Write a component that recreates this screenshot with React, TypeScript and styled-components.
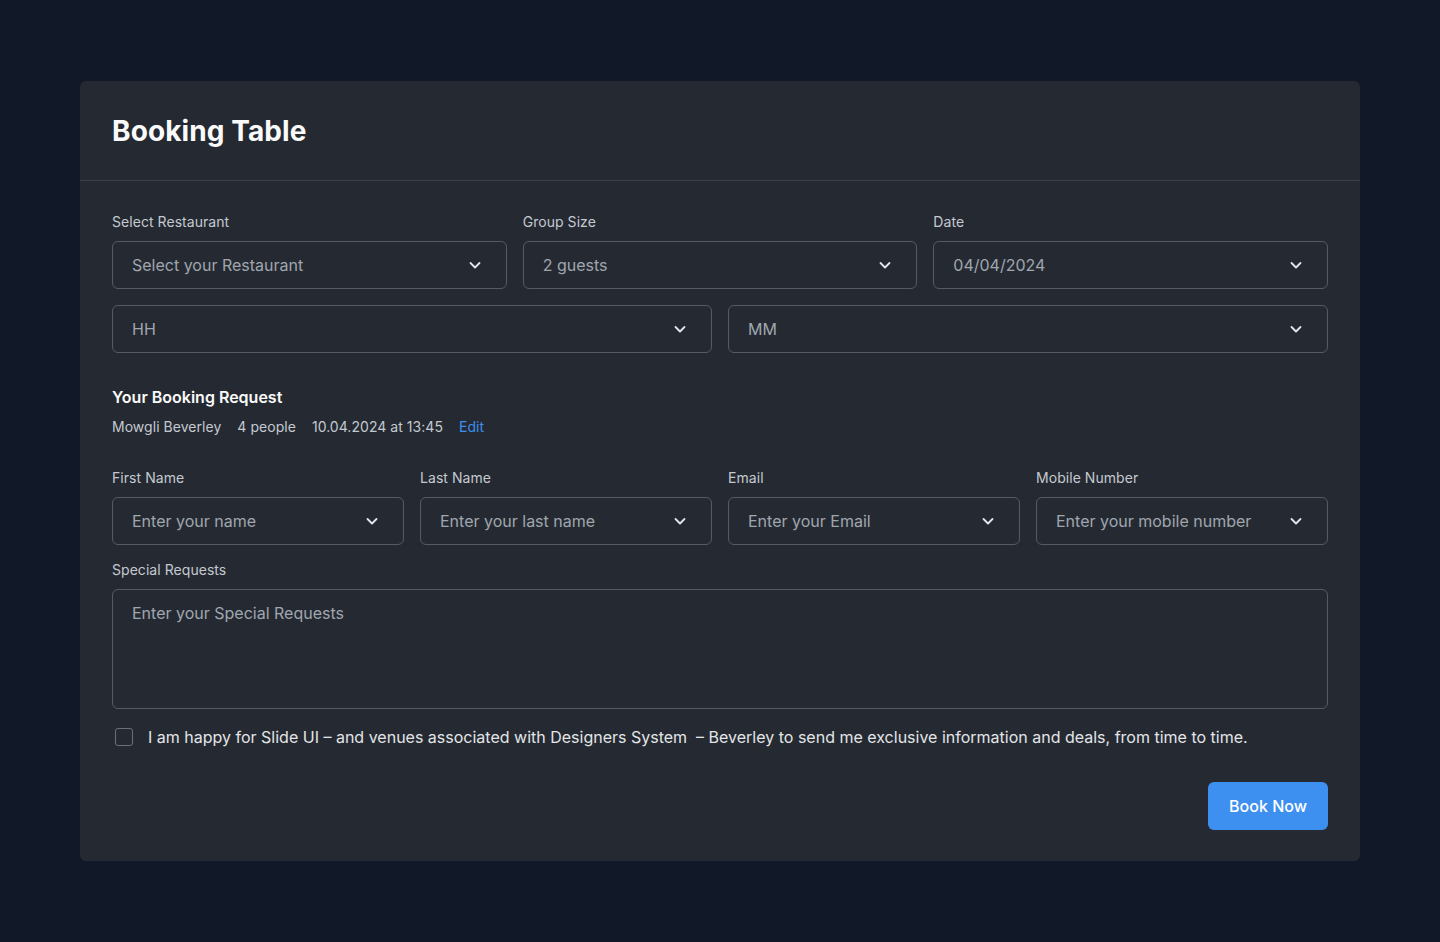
import React from "react";
import styled, { createGlobalStyle } from "styled-components";

const Global = createGlobalStyle`
  * { box-sizing: border-box; }
  html, body { margin: 0; padding: 0; background: #111827; }
  body { font-family: Inter, "Noto Sans", Arial, sans-serif; -webkit-font-smoothing: antialiased; }
`;

const Page = styled.div`
  min-height: 942px;
  padding: 81px 80px;
  background: #111827;
`;

const Card = styled.div`
  background: #252a32;
  border-radius: 6px;
`;

const Header = styled.div`
  padding: 32px 32px 31px;
  border-bottom: 1px solid #3a4049;
`;

const Title = styled.h1`
  margin: 0;
  font-size: 28px;
  line-height: 36px;
  font-weight: 700;
  color: #fafafa;
  letter-spacing: 0.1px;
`;

const Body = styled.div`
  padding: 31px 32px 31px;
  display: flex;
  flex-direction: column;
`;

const Grid = styled.div<{ $cols: number; $mt?: number }>`
  display: grid;
  grid-template-columns: repeat(${(p) => p.$cols}, 1fr);
  gap: 16px;
  margin-top: ${(p) => p.$mt ?? 0}px;
`;

const Field = styled.div<{ $mt?: number }>`
  display: flex;
  flex-direction: column;
  margin-top: ${(p) => p.$mt ?? 0}px;
`;

const Label = styled.label`
  font-size: 14px;
  line-height: 20px;
  color: #c4c9d0;
  margin-bottom: 9px;
  letter-spacing: 0.05px;
`;

const SelectBox = styled.div`
  height: 48px;
  border: 1px solid #555b64;
  border-radius: 6px;
  padding: 0 24px 0 19px;
  display: flex;
  align-items: center;
  justify-content: space-between;
  font-size: 16px;
  color: #a0a6af;
`;

const Chevron = () => (
  <svg width="14" height="14" viewBox="0 0 14 14" fill="none">
    <path d="M2.5 5L7 9.5L11.5 5" stroke="#e5e7eb" strokeWidth="1.8" strokeLinecap="round" strokeLinejoin="round" />
  </svg>
);

const Select = ({ value }: { value: string }) => (
  <SelectBox>
    <span>{value}</span>
    <Chevron />
  </SelectBox>
);

const SectionTitle = styled.h2`
  margin: 32px 0 0;
  font-size: 16px;
  line-height: 24px;
  font-weight: 600;
  color: #fafafa;
`;

const Details = styled.div`
  margin-top: 8px;
  display: flex;
  gap: 16px;
  font-size: 14px;
  line-height: 20px;
  color: #c4c9d0;
  letter-spacing: 0.04px;
`;

const EditLink = styled.a`
  color: #3d8ff0;
  text-decoration: none;
`;

const TextArea = styled.div`
  height: 120px;
  border: 1px solid #555b64;
  border-radius: 6px;
  padding: 11px 19px;
  font-size: 16px;
  line-height: 24px;
  color: #a0a6af;
`;

const CheckRow = styled.div`
  margin-top: 16px;
  display: flex;
  align-items: center;
  gap: 12px;
  font-size: 16px;
  line-height: 24px;
  color: #e3e5e8;
`;

const CheckWrap = styled.span`
  width: 24px;
  height: 24px;
  display: flex;
  align-items: center;
  justify-content: center;
`;

const Box = styled.span`
  width: 18px;
  height: 18px;
  border: 1.5px solid #6b717a;
  border-radius: 3px;
`;

const Actions = styled.div`
  margin-top: 33px;
  display: flex;
  justify-content: flex-end;
`;

const Button = styled.button`
  width: 120px;
  height: 48px;
  border: none;
  border-radius: 6px;
  background: #3d8ff0;
  color: #ffffff;
  font-family: inherit;
  font-size: 16px;
  font-weight: 500;
`;

export default function App() {
  return (
    <>
      <Global />
      <Page>
        <Card>
          <Header>
            <Title>Booking Table</Title>
          </Header>
          <Body>
            <Grid $cols={3}>
              <Field>
                <Label>Select Restaurant</Label>
                <Select value="Select your Restaurant" />
              </Field>
              <Field>
                <Label>Group Size</Label>
                <Select value="2 guests" />
              </Field>
              <Field>
                <Label>Date</Label>
                <Select value="04/04/2024" />
              </Field>
            </Grid>
            <Grid $cols={2} $mt={16}>
              <Select value="HH" />
              <Select value="MM" />
            </Grid>
            <SectionTitle>Your Booking Request</SectionTitle>
            <Details>
              <span>Mowgli Beverley</span>
              <span>4 people</span>
              <span>10.04.2024 at 13:45</span>
              <EditLink href="#">Edit</EditLink>
            </Details>
            <Grid $cols={4} $mt={31}>
              <Field>
                <Label>First Name</Label>
                <Select value="Enter your name" />
              </Field>
              <Field>
                <Label>Last Name</Label>
                <Select value="Enter your last name" />
              </Field>
              <Field>
                <Label>Email</Label>
                <Select value="Enter your Email" />
              </Field>
              <Field>
                <Label>Mobile Number</Label>
                <Select value="Enter your mobile number" />
              </Field>
            </Grid>
            <Field $mt={15}>
              <Label>Special Requests</Label>
              <TextArea>Enter your Special Requests</TextArea>
            </Field>
            <CheckRow>
              <CheckWrap>
                <Box />
              </CheckWrap>
              <span>
                I am happy for Slide UI – and venues associated with Designers System&nbsp; – Beverley to send me exclusive information and deals, from time to time.
              </span>
            </CheckRow>
            <Actions>
              <Button>Book Now</Button>
            </Actions>
          </Body>
        </Card>
      </Page>
    </>
  );
}
